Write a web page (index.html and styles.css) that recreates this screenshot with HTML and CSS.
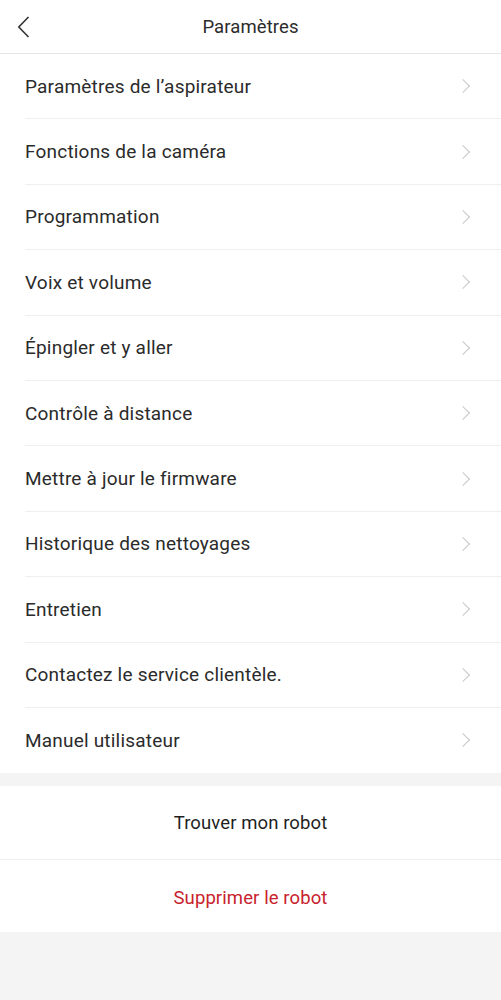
FILE: index.html
```html
<!DOCTYPE html>
<html lang="fr">
<head>
  <meta charset="UTF-8">
  <meta name="viewport" content="width=device-width, initial-scale=1.0">
  <title>Paramètres</title>
  <link rel="stylesheet" href="styles.css">
</head>
<body>
  <header class="topbar">
    <button class="back" aria-label="Retour">
      <svg width="14" height="22" viewBox="0 0 14 22"><path d="M11.5 1 L1.8 11 L11.5 21" fill="none" stroke="#333" stroke-width="1.6"/></svg>
    </button>
    <h1>Paramètres</h1>
  </header>

  <ul class="menu">
    <li>Paramètres de l’aspirateur</li>
    <li>Fonctions de la caméra</li>
    <li>Programmation</li>
    <li>Voix et volume</li>
    <li>Épingler et y aller</li>
    <li>Contrôle à distance</li>
    <li>Mettre à jour le firmware</li>
    <li>Historique des nettoyages</li>
    <li>Entretien</li>
    <li>Contactez le service clientèle.</li>
    <li>Manuel utilisateur</li>
  </ul>

  <div class="actions">
    <button class="action">Trouver mon robot</button>
    <button class="action danger">Supprimer le robot</button>
  </div>
</body>
</html>
```

FILE: styles.css
```css
body {
  margin: 0;
  font-family: Roboto, "Noto Sans", sans-serif;
  background-color: #f4f4f4;
  color: #2b2b2b;
}
.topbar {
  position: relative;
  height: 53px;
  background: #fff;
  border-bottom: 1px solid #e6e6e6;
  display: flex;
  align-items: center;
  justify-content: center;
}
.topbar h1 {
  margin: 0;
  font-size: 18.5px;
  font-weight: 400;
  letter-spacing: 0.1px;
  color: #2b2b2b;
}
.back {
  position: absolute;
  left: 17px;
  top: 16px;
  padding: 0;
  border: none;
  background: none;
  line-height: 0;
}
.menu {
  list-style: none;
  margin: 0;
  padding: 0 0 0 25px;
  background: #fff;
}
.menu li {
  box-sizing: border-box;
  height: 65.4px;
  display: flex;
  align-items: center;
  font-size: 19px;
  letter-spacing: 0.2px;
  border-bottom: 1px solid #efefef;
  padding-right: 30px;
  position: relative;
}
.menu li:last-child {
  border-bottom: none;
  height: 65px;
}
.menu li::after {
  content: "";
  position: absolute;
  right: 33px;
  top: 50%;
  width: 9px;
  height: 9px;
  border-top: 1.5px solid #c8c8c8;
  border-right: 1.5px solid #c8c8c8;
  transform: translateY(-50%) rotate(45deg);
}
.actions {
  margin-top: 13px;
  background: #fff;
}
.action {
  display: block;
  width: 100%;
  height: 73px;
  padding: 2px 0 0;
  border: none;
  background: none;
  font-family: inherit;
  font-size: 18.5px;
  letter-spacing: 0.1px;
  color: #1f1f1f;
}
.action + .action {
  border-top: 1px solid #eeeeee;
  padding-top: 5px;
}
.danger {
  color: #c8232c;
}
```
